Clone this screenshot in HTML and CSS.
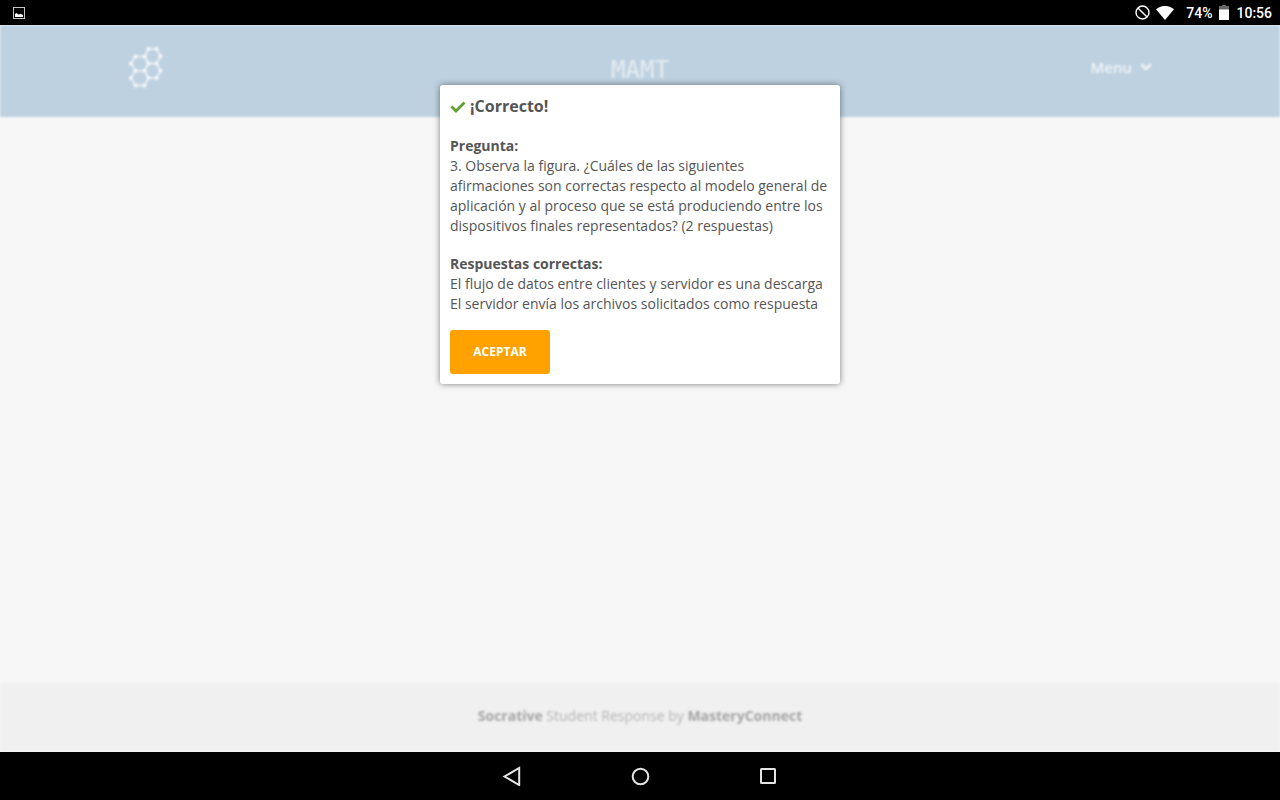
FILE: index.html
```html
<!DOCTYPE html>
<html lang="es">
<head>
<meta charset="utf-8">
<meta name="viewport" content="width=device-width, initial-scale=1">
<title>Socrative Student</title>
<link rel="stylesheet" href="styles.css">
</head>
<body>
<div class="status-bar">
  <svg class="status-picture" width="12" height="12" viewBox="0 0 12 12"><rect x=".5" y=".5" width="11" height="11" fill="none" stroke="#c4c4c4"/><path d="M2 10V7l1.500-1L5 7.200l1 .3 1.500-.7L9 7.500 10 8v2z" fill="#fff"/></svg>
  <div class="status-right">
    <svg width="16" height="16" viewBox="0 0 16 16" fill="none" stroke="#fff" stroke-width="1.400"><circle cx="8.500" cy="7.500" r="6.500"/><path d="M3.900 2.900l9.200 9.200"/></svg>
    <svg class="status-wifi" width="18" height="14" viewBox="0 0 18 14"><path d="M0 3.200C5.300-1.100 12.700-1.100 18 3.200L9 14z" fill="#fff"/></svg>
    <span class="status-percent">74%</span>
    <svg class="status-battery" width="10" height="15" viewBox="0 0 10 15"><path d="M3 0h4v1h3v4H0V1h3z" fill="#666"/><path d="M0 4.500h10V15H0z" fill="#fff"/></svg>
    <span>10:56</span>
  </div>
</div>
<div class="app">
  <header class="app-header">
    <div class="header-inner">
      <svg class="logo" width="36" height="44" viewBox="0 0 36 44"><g fill="none" stroke="#edf2f6" stroke-width="1.600"><path d="M7.500 11.500h9l4 7-4 7.300h-9l-4.500-7.300z"/><path d="M20.500 4h8l4 7.300-4 7.200h-8l-4-7z"/><path d="M20.500 18.500h8l4 7.300-4 7.200h-8l-4-7.200z"/><path d="M7.500 25.800h9l4 7.200-4 7.400h-9L3 33z"/></g><g fill="#f8fafc"><circle cx="7.500" cy="11.500" r="2"/><circle cx="3" cy="18.500" r="2"/><circle cx="7.500" cy="25.800" r="2"/><circle cx="16.500" cy="25.800" r="2"/><circle cx="20.500" cy="18.500" r="2"/><circle cx="16.500" cy="11.500" r="2"/><circle cx="20.500" cy="4" r="2"/><circle cx="28.500" cy="4" r="2"/><circle cx="32.500" cy="11.300" r="2"/><circle cx="28.500" cy="18.500" r="2"/><circle cx="32.500" cy="25.800" r="2"/><circle cx="28.500" cy="33" r="2"/><circle cx="20.500" cy="33" r="2"/><circle cx="16.500" cy="40.400" r="2"/><circle cx="7.500" cy="40.400" r="2"/><circle cx="3" cy="33" r="2"/></g></svg>
      <h1 class="room-name">MAMT</h1>
      <button class="menu-button" type="button">Menu <svg width="12" height="8" viewBox="0 0 12 8" fill="none" stroke="currentColor" stroke-width="2.600"><path d="M1.200 1.300L6 6l4.800-4.700"/></svg></button>
    </div>
  </header>
  <main class="app-main"></main>
  <footer class="app-footer"><p><strong>Socrative</strong> Student Response by <strong>MasteryConnect</strong></p></footer>
  <section class="modal" role="dialog" aria-labelledby="result-title">
    <h2 class="modal-title" id="result-title"><svg width="16" height="12" viewBox="0 0 16 12" fill="none" stroke="#5f9f30" stroke-width="2.800"><path d="M1.500 5.500L6 10l8.500-8.500"/></svg>¡Correcto!</h2>
    <div class="modal-block">
      <h3>Pregunta:</h3>
      <p>3. Observa la figura. ¿Cuáles de las siguientes afirmaciones son correctas respecto al modelo general de aplicación y al proceso que se está produciendo entre los dispositivos finales representados? (2 respuestas)</p>
    </div>
    <div class="modal-block">
      <h3>Respuestas correctas:</h3>
      <p>El flujo de datos entre clientes y servidor es una descarga</p>
      <p>El servidor envía los archivos solicitados como respuesta</p>
    </div>
    <button class="accept-button" type="button">ACEPTAR</button>
  </section>
</div>
<nav class="nav-bar">
  <button type="button" aria-label="Back"><svg width="20" height="20" viewBox="0 0 20 20"><path d="M17.200 2v17L2.500 10.500z"/></svg></button>
  <button type="button" aria-label="Home"><svg width="20" height="20" viewBox="0 0 20 20"><circle cx="10.500" cy="10.500" r="7.800"/></svg></button>
  <button type="button" aria-label="Recent apps"><svg width="20" height="20" viewBox="0 0 20 20"><rect x="3" y="3" width="14" height="14" rx=".5"/></svg></button>
</nav>
</body>
</html>
```
FILE: styles.css
```css
* {
  box-sizing: border-box;
}

body,
h1,
h2,
h3,
p {
  margin: 0;
}

body {
  display: flex;
  flex-direction: column;
  min-height: 100vh;
  font-family: "Open Sans", sans-serif;
  font-size: 14px;
  line-height: 20px;
  color: #555;
}

button {
  border: 0;
  padding: 0;
  background: none;
  font-family: inherit;
}

svg {
  flex: none;
}

.status-bar {
  display: flex;
  align-items: center;
  justify-content: space-between;
  height: 25px;
  padding: 0 8px 0 13px;
  background: #000;
  color: #fff;
  font-family: Roboto, sans-serif;
  font-weight: 500;
}

.status-right {
  display: flex;
  align-items: center;
}

.status-wifi {
  margin: 0 12px 0 6px;
}

.status-battery {
  margin: 0 7px;
}

.app {
  position: relative;
  display: flex;
  flex: 1;
  flex-direction: column;
  overflow: hidden;
  background: #f7f7f7;
}

.app-header,
.app-footer {
  filter: blur(1px);
}

.app-header {
  padding: 20px 10%;
  background: #bed1e0;
}

.header-inner {
  display: grid;
  grid-template-columns: 1fr auto 1fr;
  align-items: center;
  height: 52px;
}

.room-name {
  padding-bottom: 2px;
  color: #e6edf2;
  font-family: "DejaVu Sans Mono", monospace;
  font-size: 24px;
  font-weight: 400;
  line-height: 32px;
}

.menu-button {
  display: flex;
  align-items: center;
  justify-self: end;
  gap: 8px;
  padding-bottom: 8px;
  color: #f1f5f8;
  font-size: 15px;
  font-weight: 600;
}

.logo {
  margin-bottom: 8px;
}

.app-main {
  flex: 1;
}

.app-footer {
  padding: 23px 0 26px;
  background: #f0f0f0;
  color: #b4b4b4;
  text-align: center;
}

.app-footer strong {
  color: #a4a4a4;
}

.modal {
  position: absolute;
  top: 60px;
  left: 50%;
  width: 400px;
  padding: 10px;
  transform: translateX(-50%);
  border-radius: 3px;
  background: #fff;
  box-shadow: 0 0 6px rgba(0, 0, 0, 0.5);
}

.modal-title {
  display: flex;
  align-items: center;
  gap: 4px;
  margin-bottom: 18px;
  font-size: 16px;
  line-height: 23px;
}

.modal-block {
  margin-bottom: 18px;
}

.modal-block:last-of-type {
  margin-bottom: 16px;
}

.modal-block h3 {
  font-size: 14px;
}

.accept-button {
  display: block;
  width: 100px;
  height: 44px;
  padding-bottom: 2px;
  border-radius: 3px;
  background: #ffa200;
  color: #fff;
  font-size: 12px;
  font-weight: 700;
}

.nav-bar {
  display: flex;
  align-items: center;
  justify-content: center;
  height: 48px;
  background: #000;
}

.nav-bar button {
  display: flex;
  justify-content: center;
  width: 128px;
}

.nav-bar svg {
  fill: none;
  stroke: #e4e4e4;
  stroke-width: 2;
}
```
